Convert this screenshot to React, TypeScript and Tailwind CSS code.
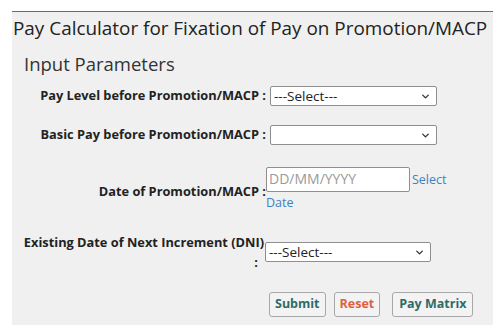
import { ChevronDown } from 'lucide-react';

const font = { fontFamily: '"Open Sans", "Noto Sans", sans-serif' };

function Select({ value, width }: { value: string; width: string }) {
  return (
    <div
      className={`${width} h-[20px] bg-white border border-[#8f8f8f] rounded-[2px] flex items-center justify-between pl-[3px] pr-[5px] text-[13.5px] leading-[18px] text-[#222]`}
    >
      <span>{value}</span>
      <ChevronDown size={11} strokeWidth={3} className="text-[#333]" />
    </div>
  );
}

export default function App() {
  return (
    <div className="w-[502px] h-[332px] bg-white pt-[11px] pl-[12px] pr-[9px]" style={font}>
      <div className="h-[314px] bg-[#f0f0f0] border-t border-[#6b6b6b]">
        {/* Title */}
        <h1 className="text-[18.9px] leading-[28px] text-[#222] pl-[1px] pt-[2px] whitespace-nowrap">
          Pay Calculator for Fixation of Pay on Promotion/MACP
        </h1>
        <h2 className="text-[18.5px] leading-[24px] text-[#333] pl-[12px] mt-[10px]">Input Parameters</h2>

        {/* Row 1 */}
        <div className="flex items-center h-[20px] mt-[10px]">
          <div className="w-[254px] text-right text-[12.8px] font-bold text-[#222] mr-[4px] whitespace-nowrap">
            Pay Level before Promotion/MACP :
          </div>
          <Select value="---Select---" width="w-[167px]" />
        </div>

        {/* Row 2 */}
        <div className="flex items-center h-[20px] mt-[19px]">
          <div className="w-[254px] text-right text-[12.8px] font-bold text-[#222] mr-[4px] whitespace-nowrap">
            Basic Pay before Promotion/MACP :
          </div>
          <Select value="" width="w-[167px]" />
        </div>

        {/* Row 3 */}
        <div className="flex items-center mt-[22px]">
          <div className="w-[254px] text-right text-[12.8px] font-bold text-[#222] pt-[2px] whitespace-nowrap">
            Date of Promotion/MACP :
          </div>
          <div className="w-[190px] text-[12.5px] leading-[22px]">
            <div className="flex items-center">
              <div className="w-[144px] h-[25px] bg-white border border-[#8f8f8f] rounded-[2px] pl-[2px] text-[14px] leading-[22px] text-[#9a9a9a]">
                DD/MM/YYYY
              </div>
              <span className="text-[#3b82c4] ml-[2px] mt-[1px]">Select</span>
            </div>
            <span className="text-[#3b82c4]">Date</span>
          </div>
        </div>

        {/* Row 4 */}
        <div className="flex items-center mt-[18px]">
          <div className="w-[252px] text-right text-[12.8px] leading-[20px] font-bold text-[#222] mr-[1px]">
            Existing Date of Next Increment (DNI)
            <br />
            <span className="pr-[6px]">:</span>
          </div>
          <Select value="---Select---" width="w-[166px]" />
        </div>

        {/* Buttons */}
        <div className="flex items-center mt-[20px] pl-[257px] gap-[8px]">
          <button className="h-[25px] px-[5px] bg-[#f3f3f3] border border-[#a8a8a8] rounded-[3px] text-[12.5px] font-bold text-[#2d6b6b]">
            Submit
          </button>
          <button className="h-[25px] px-[5px] bg-[#f3f3f3] border border-[#a8a8a8] rounded-[3px] text-[12.5px] font-bold text-[#e0603f]">
            Reset
          </button>
          <button className="h-[25px] px-[6px] ml-[4px] bg-[#f3f3f3] border border-[#a8a8a8] rounded-[3px] text-[12.5px] font-bold text-[#2d6b6b]">
            Pay Matrix
          </button>
        </div>
      </div>
    </div>
  );
}
